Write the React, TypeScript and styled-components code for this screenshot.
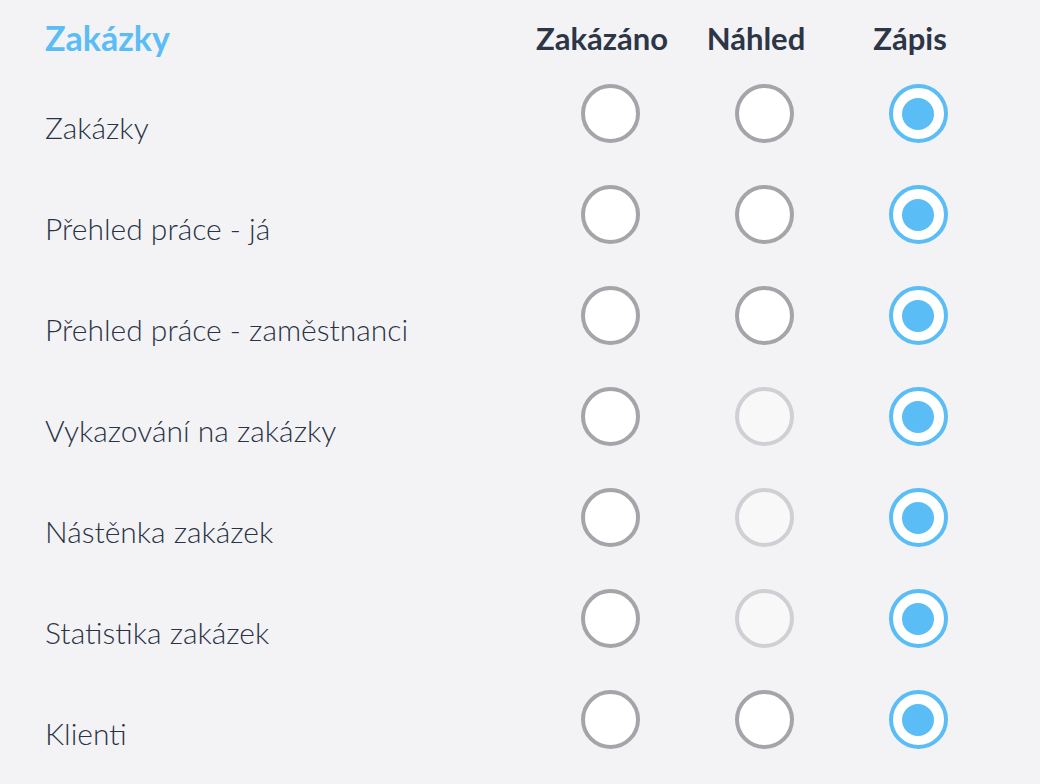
import styled, { createGlobalStyle } from 'styled-components'

type Access = 'normal' | 'disabled'

type RowData = {
  label: string,
  preview: Access,
}

const rows: Array<RowData> = [
  { label: 'Zakázky', preview: 'normal' },
  { label: 'Přehled práce - já', preview: 'normal' },
  { label: 'Přehled práce - zaměstnanci', preview: 'normal' },
  { label: 'Vykazování na zakázky', preview: 'disabled' },
  { label: 'Nástěnka zakázek', preview: 'disabled' },
  { label: 'Statistika zakázek', preview: 'disabled' },
  { label: 'Klienti', preview: 'normal' },
]

const GlobalStyle = createGlobalStyle`
  html, body {
    margin: 0;
    background: #f3f3f6;
    font-family: Lato, "Open Sans", sans-serif;
  }
`

export default function App() {
  return (
    <>
      <GlobalStyle />
      <Page>
        <Table>
          <Title>Zakázky</Title>
          <Header>Zakázáno</Header>
          <Header>Náhled</Header>
          <Header>Zápis</Header>

          {rows.map(({ label, preview }, i) => (
            <Row key={i}>
              <Label>{label}</Label>
              <Cell>
                <Radio />
              </Cell>
              <Cell>
                <Radio disabled={preview === 'disabled'} />
              </Cell>
              <Cell>
                <Radio checked />
              </Cell>
            </Row>
          ))}
        </Table>
      </Page>
    </>
  )
}

const Page = styled.div`
  width: 1040px;
  height: 784px;
  padding: 13px 0 0 45px;
  box-sizing: border-box;
  overflow: hidden;
`

const Table = styled.div`
  display: grid;
  grid-template-columns: 488px 154px 154px 154px;
  grid-auto-rows: 101px;
  grid-template-rows: 50px;
`

const Row = styled.div`
  display: contents;
`

const Title = styled.div`
  font-size: 34px;
  font-weight: 700;
  color: #5bbdf5;
  line-height: 50px;
`

const Header = styled.div`
  font-size: 31px;
  font-weight: 700;
  color: #2d3646;
  line-height: 50px;
  text-align: center;
  padding-right: 16px;
  white-space: nowrap;
`

const Label = styled.div`
  display: flex;
  align-items: center;
  padding-top: 26px;
  font-size: 30px;
  font-weight: 300;
  color: #2a3345;
  white-space: nowrap;
`

const Cell = styled.div`
  display: flex;
  align-items: center;
  justify-content: center;
`

const Radio = styled.div<{ checked?: boolean, disabled?: boolean }>`
  width: 59px;
  height: 59px;
  box-sizing: border-box;
  border-radius: 50%;
  border: 4px solid ${p => (p.checked ? '#5bbdf5' : p.disabled ? '#cfd0d3' : '#a4a5a9')};
  background: ${p => (p.disabled ? '#f8f8f9' : '#ffffff')};
  display: flex;
  align-items: center;
  justify-content: center;

  &::after {
    content: '';
    display: ${p => (p.checked ? 'block' : 'none')};
    width: 32px;
    height: 32px;
    border-radius: 50%;
    background: #5bbdf5;
  }
`
